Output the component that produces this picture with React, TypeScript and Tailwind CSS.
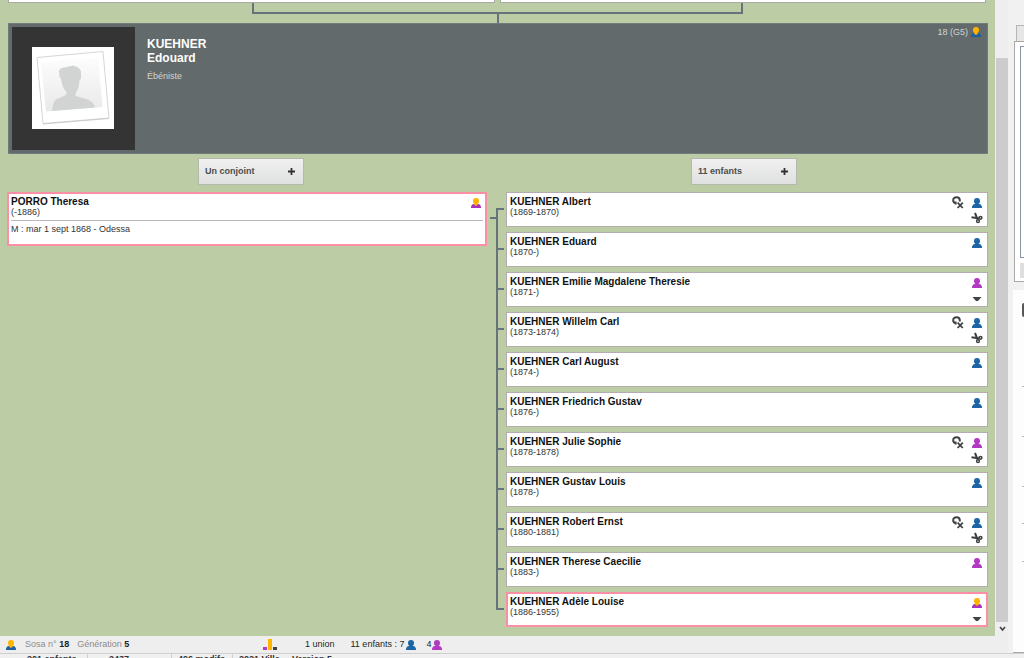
type Tone = "blue" | "purple" | "goldBlue" | "goldPurple";
type Extra = "scissors" | "arrow";
type Child = { name: string; dates: string; tone: Tone; noUnion?: boolean; extra?: Extra; direct?: boolean };

const CHILDREN: Child[] = [
  { name: "KUEHNER Albert", dates: "(1869-1870)", tone: "blue", noUnion: true, extra: "scissors" },
  { name: "KUEHNER Eduard", dates: "(1870-)", tone: "blue" },
  { name: "KUEHNER Emilie Magdalene Theresie", dates: "(1871-)", tone: "purple", extra: "arrow" },
  { name: "KUEHNER Willelm Carl", dates: "(1873-1874)", tone: "blue", noUnion: true, extra: "scissors" },
  { name: "KUEHNER Carl August", dates: "(1874-)", tone: "blue" },
  { name: "KUEHNER Friedrich Gustav", dates: "(1876-)", tone: "blue" },
  { name: "KUEHNER Julie Sophie", dates: "(1878-1878)", tone: "purple", noUnion: true, extra: "scissors" },
  { name: "KUEHNER Gustav Louis", dates: "(1878-)", tone: "blue" },
  { name: "KUEHNER Robert Ernst", dates: "(1880-1881)", tone: "blue", noUnion: true, extra: "scissors" },
  { name: "KUEHNER Therese Caecilie", dates: "(1883-)", tone: "purple" },
  { name: "KUEHNER Adèle Louise", dates: "(1886-1955)", tone: "goldPurple", extra: "arrow", direct: true },
];

const TONES: Record<Tone, [string, string]> = {
  blue: ["#1d66a5", "#1d66a5"],
  purple: ["#b23ac3", "#b23ac3"],
  goldBlue: ["#ffb400", "#1d5fa0"],
  goldPurple: ["#ffb400", "#a832bd"],
};

function Person({ tone }: { tone: Tone }) {
  const [head, body] = TONES[tone];
  return (
    <svg viewBox="0 0 10 10" className="h-[10px] w-[10px] shrink-0" aria-hidden="true">
      <path d="M0 10V8.500L1.200 6.500 3 6h4l1.800.5L10 8.500V10z" fill={body} />
      <path d="M5 0C2.900 0 2 1.100 2 2.900c0 1.300.5 2.100 1.200 2.800l.2 1.300L5 8l1.600-1 .2-1.300C7.500 5 8 4.200 8 2.900 8 1.100 7.100 0 5 0z" fill={head} />
    </svg>
  );
}

function Scissors() {
  return (
    <svg viewBox="0 0 12 12" className="h-3 w-3 shrink-0" fill="none" stroke="#3c4043" aria-hidden="true">
      <path d="M.5 5.300 8.300 6.400M4 1 6.800 7.800" strokeWidth="2" />
      <circle cx="9.500" cy="5.800" r="1.400" strokeWidth="1.500" />
      <circle cx="7" cy="9.200" r="1.400" strokeWidth="1.500" />
    </svg>
  );
}

function NoUnion() {
  return (
    <svg viewBox="0 0 12 13" className="h-[13px] w-3 shrink-0" fill="none" stroke="#3f4244" aria-hidden="true">
      <path d="M4 7.200C2.200 7 1.200 5.800 1.200 4.200 1.200 2.300 2.500 1.200 4.500 1.200s3.300 1.200 3.300 3v1.200" strokeWidth="2" />
      <path d="M3.700 5.400v3M5.600 6.600l5.200 5.400M10.800 6.600 5.600 12" strokeWidth="1.800" />
    </svg>
  );
}

function Arrow() {
  return (
    <svg viewBox="0 0 12 12" className="h-3 w-3 shrink-0" aria-hidden="true">
      <path d="M1.500 5h9L7 9H5z" fill="#3f4447" />
    </svg>
  );
}

function ChildCard({ c }: { c: Child }) {
  return (
    <li className={`flex h-[35px] justify-between bg-white ${c.direct ? "border-2 border-[#fb8fa3] py-[2px] pr-[3px] pl-[2px]" : "border border-[#b3adb1] py-[3px] pr-1 pl-[3px]"}`}>
      <div>
        <a href="#" className="block text-[10px] leading-[11px] font-bold text-[#111]">{c.name}</a>
        <p className="leading-[11px]">{c.dates}</p>
      </div>
      <div className="flex gap-[7px]">
        {c.noUnion && <NoUnion />}
        <div className="flex w-3 flex-col items-center gap-1 pt-[2px]">
          <Person tone={c.tone} />
          {c.extra === "scissors" && <Scissors />}
          {c.extra === "arrow" && <Arrow />}
        </div>
      </div>
    </li>
  );
}

function Branches({ count }: { count: number }) {
  return (
    <div className="flex pl-[3px]" aria-hidden="true">
      <div className="mt-[25px] h-[2px] w-[6px] bg-[#66737a]" />
      <div className="w-2">
        {Array.from({ length: count }, (_, i) => (
          <div key={i} className={`flex flex-col ${i < count - 1 ? "h-10" : "h-[35px]"}`}>
            <div className={`h-4 ${i > 0 ? "border-l-2 border-[#66737a]" : ""}`} />
            <div className="h-[2px] bg-[#66737a]" />
            <div className={`flex-1 ${i < count - 1 ? "border-l-2 border-[#66737a]" : ""}`} />
          </div>
        ))}
      </div>
    </div>
  );
}

function AddButton({ label }: { label: string }) {
  return (
    <button className="flex h-[27px] w-[106px] items-center justify-between justify-self-center border border-[#b4b8ad] bg-linear-to-b from-[#f0f0f0] to-[#dfe1e0] px-[6px] font-bold text-[#4d4d4d]">
      {label}
      <svg viewBox="0 0 11 11" className="h-[11px] w-[11px]" stroke="#333" strokeWidth="1.800" aria-hidden="true"><path d="M2 5.500h7M5.500 2v7" /></svg>
    </button>
  );
}

function Portrait() {
  return (
    <div className="h-[123px] w-[123px] shrink-0 bg-[#333433] p-5">
      <svg viewBox="0 0 82 82" className="h-[82px] w-[82px]" role="img" aria-label="Portrait">
        <defs>
          <linearGradient id="paper" x1="0" y1="0" x2="0" y2="1">
            <stop offset="0" stopColor="#fdfdfd" />
            <stop offset="1" stopColor="#e9e9e9" />
          </linearGradient>
        </defs>
        <path d="M0 0h82v82H0z" fill="#fff" />
        <path d="M5 10.500 71 4.500 77 71 11 76.500z" fill="#fff" stroke="#d6d6d6" strokeWidth="1" />
        <path d="M11 77 77 71.500" stroke="#c4c4c4" strokeWidth=".8" />
        <path d="M9 15.500 66 10.500 70.500 60 14 64.500z" fill="url(#paper)" />
        <path d="M20 64q.5-8 4-11.500l9-4q2-1 1-4c-3-3.500-4.500-8-5-13l-1.500-1.500-.5-6q1-3.500 6-3.500l8-2 4 1.500q4 2 4 5.500v6l-1.500 2c0 6-2 10-4 13q-.5 2.500 2 3l10 3q6 2 7.500 8z" fill="#d2d3d3" />
      </svg>
    </div>
  );
}

function Sidebar() {
  return (
    <aside className="flex w-4 shrink-0 flex-col bg-[#f1f1f1]">
      <div className="mt-[25px] ml-2 h-4 border-t border-l border-[#b5b5b5] bg-[#e6e6e6]" />
      <div className="ml-[6px] h-[241px] border-y border-l border-[#a9a9a9] bg-white pt-1 pl-[5px]">
        <div className="h-[212px] border-y border-l border-[#8796a5]" />
        <div className="mt-[5px] h-[15px] bg-[#dedede]" />
      </div>
      <div className="mt-2 ml-[5px] flex flex-1 flex-col items-end border-b border-[#a9a9a9] bg-[#fdfdfd] pt-[13px]">
        <div className="h-[14px] w-[2px] rounded-l-full bg-[#55585a]" />
        <div className="mt-[69px] h-px w-[2px] bg-[#b8b8b8]" />
        <div className="mt-[49px] h-px w-[2px] bg-[#b8b8b8]" />
        <div className="mt-[49px] h-px w-[2px] bg-[#b8b8b8]" />
        <div className="mt-9 h-px w-[2px] bg-[#b8b8b8]" />
        <div className="mt-[37px] h-px w-[2px] bg-[#b8b8b8]" />
      </div>
    </aside>
  );
}

export default function App() {
  return (
    <div className="flex h-screen flex-col overflow-hidden bg-[#eeeeee] font-['Liberation_Sans',Arial,sans-serif] text-[9px] leading-[11px] text-[#333]">
      <div className="flex shrink-0">
        <div className="flex min-w-0 flex-1 flex-col">
          <main className="bg-[#bccda5] pr-[7px] pb-[9px] pl-[7px]">
            <div className="mr-[2px] ml-px grid grid-cols-2 gap-[5px]">
              <div className="h-[3px] border-x border-b border-[#a9aaa2] bg-white" />
              <div className="h-[3px] border-x border-b border-[#a9aaa2] bg-white" />
            </div>
            <div className="mx-auto h-[11px] w-1/2 border-x-2 border-b-2 border-[#66737a]" />
            <div className="mx-auto h-[9px] w-[2px] bg-[#66737a]" />

            <header className="ml-px flex border border-[#6f7b7d] bg-[#626a6b] p-[3px] text-[#d2d3d0]">
              <Portrait />
              <div className="ml-3 flex-1 pt-[10px]">
                <h1 className="text-[12px] leading-[14px] font-bold text-white">KUEHNER<br />Edouard</h1>
                <p className="mt-[5px] leading-3">Ébéniste</p>
              </div>
              <div className="flex h-[10px] items-center gap-[3px] pr-[3px]">
                <span>18 (G5)</span>
                <Person tone="goldBlue" />
              </div>
            </header>

            <div className="mt-1 mr-px ml-px grid grid-cols-2 gap-[7px]">
              <AddButton label="Un conjoint" />
              <AddButton label="11 enfants" />
            </div>

            <div className="mt-[7px] grid grid-cols-[240fr_19px_241fr]">
              <section className="self-start border-2 border-[#fb8fa3] bg-white px-[2px] pt-[2px] pb-[9px]">
                <div className="flex justify-between">
                  <div>
                    <a href="#" className="block text-[10px] leading-[11px] font-bold text-[#111]">PORRO Theresa</a>
                    <p>(-1886)</p>
                  </div>
                  <div className="pt-[2px] pr-[2px]"><Person tone="goldPurple" /></div>
                </div>
                <hr className="mt-[2px] border-[#bdb8bb]" />
                <p className="mt-[3px]">M : mar 1 sept 1868 - Odessa</p>
              </section>
              <Branches count={CHILDREN.length} />
              <ul className="flex flex-col gap-[5px]">
                {CHILDREN.map((c) => <ChildCard key={c.name} c={c} />)}
              </ul>
            </div>
          </main>

          <footer className="flex h-[17px] items-center pl-[6px] text-[#1f1f1f]">
            <div className="flex w-[257px] items-center">
              <Person tone="goldBlue" />
              <span className="ml-[9px] text-[#8c8c8c]">Sosa n° <b className="text-[#222]">18</b></span>
              <span className="ml-2 text-[#8c8c8c]">Génération <b className="text-[#222]">5</b></span>
            </div>
            <svg viewBox="0 0 14 11" className="h-[11px] w-[14px]" aria-hidden="true">
              <path d="M0 8h4v3H0z" fill="#b23ac3" />
              <path d="M5 0h4v11H5z" fill="#ffb400" />
              <path d="M10 8h4v3h-4z" fill="#3f4447" />
            </svg>
            <span className="ml-7">1 union</span>
            <span className="mr-[2px] ml-4">11 enfants : 7</span>
            <Person tone="blue" />
            <span className="mr-px ml-[10px]">4</span>
            <Person tone="purple" />
          </footer>
        </div>

        <div className="mb-[17px] flex w-[13px] shrink-0 flex-col bg-[#eeeeee] pl-px">
          <div className="h-[58px]" />
          <div className="flex-1 bg-[#cdcccd]" />
          <button className="flex h-[14px] items-center justify-center" aria-label="Défiler vers le bas">
            <svg viewBox="0 0 7 6" className="h-[6px] w-[7px]" fill="none" stroke="#444" strokeWidth="1.600" aria-hidden="true"><path d="m1 1 2.500 3L6 1" /></svg>
          </button>
        </div>
        <Sidebar />
      </div>

      <div className="flex shrink-0 border-t border-[#cfcfcf] bg-[#f0f0f0] font-bold">
        <span className="w-[87px] pl-[27px]">201 enfants</span>
        <span className="w-[84px] border-l border-[#cfcfcf] pl-[21px]">2437</span>
        <span className="w-[61px] border-l border-[#cfcfcf] pl-[6px]">496 modifs</span>
        <span className="w-14 border-l border-[#cfcfcf] pl-[6px]">2021 Ville</span>
        <span className="pl-1">Version 5</span>
      </div>
    </div>
  );
}
